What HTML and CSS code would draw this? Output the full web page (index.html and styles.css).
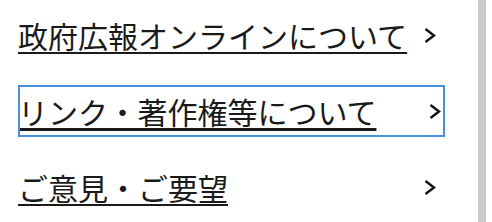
FILE: index.html
```html
<!DOCTYPE html>
<html>
<head>
    <title>リンク</title>
    <link rel="stylesheet" href="styles.css">
</head>
<body>
    <div class="page">
        <ul class="links">
            <li>
                <a class="link" href="#">
                    <span class="label">政府広報オンラインについて</span>
                    <svg class="chev" width="12" height="18" viewBox="0 0 12 18"><polyline points="1.5,3 10,9.5 1.5,16" /></svg>
                </a>
            </li>
            <li>
                <a class="link focused" href="#">
                    <span class="label">リンク・著作権等について</span>
                    <svg class="chev" width="12" height="18" viewBox="0 0 12 18"><polyline points="1.5,3 10,9.5 1.5,16" /></svg>
                </a>
            </li>
            <li>
                <a class="link" href="#">
                    <span class="label">ご意見・ご要望</span>
                    <svg class="chev" width="12" height="18" viewBox="0 0 12 18"><polyline points="1.5,3 10,9.5 1.5,16" /></svg>
                </a>
            </li>
        </ul>
        <div class="scrollbar"></div>
    </div>
</body>
</html>
```

FILE: styles.css
```css
* {
    box-sizing: border-box;
    margin: 0;
    padding: 0;
}

body {
    background-color: #fff;
    font-family: "Noto Sans CJK JP", "Noto Sans", sans-serif;
    color: #1a1a1a;
}

.page {
    display: flex;
    height: 222px;
}

.links {
    list-style-type: none;
    display: flex;
    flex-direction: column;
    gap: 24px;
    padding: 9px 0 0 18px;
    width: 478px;
}

.link {
    display: flex;
    align-items: center;
    justify-content: space-between;
    width: 427px;
    height: 52px;
    padding-right: 9px;
    color: #1a1a1a;
    text-decoration: none;
}

.label {
    font-size: 30px;
    line-height: 52px;
    text-decoration: underline;
    text-decoration-thickness: 2px;
    text-underline-offset: 4px;
}

.chev {
    fill: none;
    stroke: #111;
    stroke-width: 2.4;
}

.focused {
    outline: 2px solid #4a8ee0;
    outline-offset: -2px;
    padding-right: 4px;
}

.focused .label {
    text-decoration-thickness: 3px;
}

.scrollbar {
    width: 8px;
    background-color: #cbcbcb;
}
```
